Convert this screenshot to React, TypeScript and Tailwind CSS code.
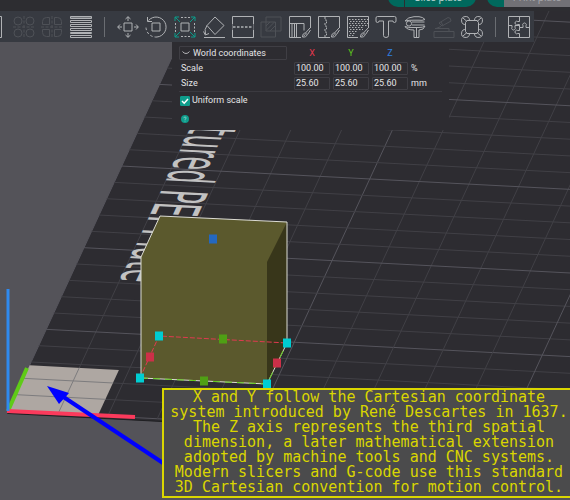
import type { ReactNode } from "react";
import clsx from "clsx";

type Tool = {
  label: string;
  disabled?: boolean;
  icon: ReactNode;
};

const brush = (
  <path d="M21 12l-4.5 5M21.5 14l-3 4.5M16.5 17c-2 0-3 1.500-3 4 2.500.3 4.500-.5 4.500-2.500zM14.500 20l2-1.500" />
);

const plateTools: Tool[] = [
  { label: "Add plate", icon: <path d="M.5.5h17v21H.5z" /> },
  {
    label: "Auto orient",
    disabled: true,
    icon: (
      <>
        <circle cx="5" cy="5" r="4" />
        <circle cx="17" cy="5" r="4" />
        <circle cx="5" cy="17" r="4" />
        <circle cx="17" cy="17" r="4" />
        <path d="M11 0v22M0 11h22" strokeDasharray="3 1.5" />
      </>
    ),
  },
  {
    label: "Arrange",
    disabled: true,
    icon: (
      <>
        <path d="M8.500 1.500v7h-7v-3q0-4 4-4zM13.500 1.500v7h7v-3q0-4-4-4zM8.500 20.500v-7h-7v3q0 4 4 4zM13.500 20.500v-7h7v3q0 4-4 4z" />
        <path d="M11 0v22M0 11h22" strokeDasharray="3 1.5" />
      </>
    ),
  },
  {
    label: "Variable layer height",
    icon: (
      <>
        <path d="M.5.5h21v2H.5z" fill="currentColor" fillOpacity="0.5" />
        <path d="M.5 4.500h21v2H.5zM.5 8.500h21v2H.5zM.5 12.500h21v2H.5zM.5 16.500h21v1H.5zM.5 19.500h21v2H.5z" />
      </>
    ),
  },
];

const objectTools: Tool[] = [
  {
    label: "Move",
    icon: (
      <>
        <path d="M7 7h8v8H7z" />
        <path d="M11 5V.8M8.500 3L11 .7 13.500 3M11 17v4.200M8.500 19l2.500 2.300 2.500-2.300M5 11H.8M3 8.500L.7 11 3 13.500M17 11h4.200M19 8.500l2.300 2.500-2.300 2.500" />
      </>
    ),
  },
  {
    label: "Rotate",
    icon: (
      <>
        <path d="M7 7h8v8H7z" />
        <path d="M3.500 4.500A10 10 0 1 1 12 21" />
        <path d="M12 21A10 10 0 0 1 1 10.500" strokeDasharray="2.500 2" />
        <path d="M2.500 1v4.500H7" />
      </>
    ),
  },
  {
    label: "Scale",
    icon: (
      <>
        <path d="M7 7h8v8H7z" />
        <path d="M7 1.500h9M7 20.500h9M1.500 7v9M20.500 7v9" strokeDasharray="2 1.500" />
        <path
          className="stroke-[#0a9c8b]"
          d="M6 6L1 1M1 5V1h4M16 6l5-5M17 1h4v4M6 16l-5 5M1 17v4h4M16 16l5 5M21 17v4h-4"
        />
      </>
    ),
  },
  {
    label: "Lay on face",
    icon: (
      <path d="M12 1l9 8.500-9 9L4 9.500zM4 9.500Q1 13 2.500 18.500M.5 15.500l1.800 3.500L6 17.500M1 21.500h21" />
    ),
  },
  {
    label: "Cut",
    icon: (
      <>
        <path d="M.5 8V.5h21V8M.5 14v7.500h21V14" />
        <path d="M.5 8v6M21.500 8v6" strokeOpacity="0.4" />
        <path d="M1 11h20" strokeDasharray="2.500 1.500" strokeWidth="1.5" />
      </>
    ),
  },
  {
    label: "Mesh boolean",
    disabled: true,
    icon: (
      <path d="M6 1h15v14H6zM1 6h14.500v15H1zM6 10l4-4M6 14.500L14.500 6M10 15l5.500-5.500" />
    ),
  },
  {
    label: "Support painting",
    icon: (
      <>
        <path d="M12 21.500H.5V.5h21V12M.5 7.500H15v7M7.500 7.500v14M3 8v13M5.500 8v13" />
        {brush}
      </>
    ),
  },
  {
    label: "Seam painting",
    icon: (
      <>
        <path d="M12 21.500H.5V.5h21V12" />
        <path d="M7 1v3h1.500v3H7v3h1.500v3H7v3h1.500v3H7v2" strokeDasharray="2 1" />
        {brush}
      </>
    ),
  },
  {
    label: "Fuzzy skin painting",
    icon: (
      <>
        <path d="M11 21.500H.5V.5h21V12" />
        <path
          d="M2 3.500h19M3 5.500h18M2 7.500h19M3 9.500h18M2 11.500h15M3 13.500h13M2 15.500h9M3 17.500h6M2 19.500h5"
          strokeDasharray="1.500 1.500"
        />
        {brush}
      </>
    ),
  },
  {
    label: "Text",
    icon: (
      <path d="M2.500.5h17q1.500 0 1.500 1.500v3q0 1.500-1.500 1.500T18 5h-4.500v14.500q0 2-2.500 2t-2.500-2V5H4q0 1.500-1.500 1.500T1 5V2Q1 .5 2.500.5z" />
    ),
  },
  {
    label: "Measure",
    icon: (
      <>
        <path d="M1 5Q4 1 10 .7h5q4 .3 6 2.800-3 1.300-6 .7h-5Q5 4 1 5zM8 6h12.500M8 9h12.500" />
        <circle cx="5" cy="7.500" r="2.600" />
        <path d="M1 10.500q3 1.300 8 1h6q4 0 6-1.500-1 4-6 4v7.500h-5V14q-7 0-9-3.500zM12.500 12v9.500" />
      </>
    ),
  },
  {
    label: "Assembly",
    disabled: true,
    icon: (
      <path d="M1 15.500h20v6H1zM3 12.500l5-2M2 12.500h14v3M6 7l9-5.500q3 0 3 3.500l-9 5zM8 6l2 3.500" />
    ),
  },
  {
    label: "Brim ears",
    icon: (
      <>
        <path d="M6 4.500h10l1.500 2v9l-1.500 2H6l-1.500-2v-9z" />
        <path d="M5 8.500A4 4 0 1 1 8.500 4M13.500 4A4 4 0 1 1 17 8.500M17 13.500A4 4 0 1 1 13.500 18M8.500 18A4 4 0 1 1 5 13.500" />
        <path d="M2 2l4 3.500M20 2l-4 3.500M2 20l4-3.500M20 20l-4-3.500" />
      </>
    ),
  },
];

const assemblyTools: Tool[] = [
  {
    label: "Assembly view",
    icon: (
      <>
        <path d="M.5.5h21v21H.5z" />
        <path d="M11.500.5v5H9.800a1.800 1.800 0 1 0 0 3h1.700v3M.5 9.500H4v1.700a1.800 1.800 0 1 0 3 0V9.500h4.500" />
        <path d="M11.500 11.500h3.500V9.800a1.800 1.800 0 1 1 3 0v1.700h3.500M11.500 21.500v-4H9.800a1.800 1.800 0 1 1 0-3h1.700v-3" />
      </>
    ),
  },
];

function ToolButton({ label, disabled, icon }: Tool) {
  return (
    <button
      type="button"
      aria-label={label}
      disabled={disabled}
      className={clsx("h-[22px] w-[22px] shrink-0", disabled ? "text-[#4e5157]" : "text-[#b0b2b5]")}
    >
      <svg viewBox="0 0 22 22" className="h-full w-full" fill="none" stroke="currentColor" aria-hidden>
        {icon}
      </svg>
    </button>
  );
}

function ToolDivider() {
  return <div className="mx-[5px] h-5 w-px shrink-0 bg-[#6a6d72]" />;
}

// Build plate units are millimetres: x runs right, y runs toward the viewer.
const PLATE = 600;
const ticks = Array.from({ length: 60 }, (_, i) => i);

function Handle({ x, y, fill }: { x: number; y: number; fill: string }) {
  return <rect x={x - 4} y={y - 4.5} width="8" height="9" fill={fill} />;
}

function Scene() {
  return (
    <svg className="absolute inset-0 h-full w-full" aria-label="Build plate">
      <g transform="matrix(4.96 0.258 -0.755 1.633 8.5 411)">
        <rect x="0" y={-PLATE} width={PLATE} height={PLATE + 1.5} fill="#2d2c31" />
        <path d={`M0 1.500H${PLATE}`} stroke="#1f1f22" vectorEffect="non-scaling-stroke" />
        {ticks.map((i) => (
          <path
            key={i}
            d={`M${i * 10} 0V${-PLATE}M0 ${-i * 10}H${PLATE}`}
            stroke={i % 5 === 0 ? "#55545c" : "#414046"}
            strokeWidth="1"
            vectorEffect="non-scaling-stroke"
          />
        ))}
        <text
          transform="translate(10 -81) rotate(90)"
          textAnchor="end"
          fill="#c2c2c2"
          className="font-['DejaVu_Sans'] text-[13px]"
        >
          Textured PEI Plate
        </text>
        <path d="M0 0V-28H18V0z" fill="#aea7a2" />
        <path d="M10 0V-28M0-10H18M0-20H18" stroke="#7d7c7e" fill="none" vectorEffect="non-scaling-stroke" />
      </g>

      {/* axes */}
      <path d="M8 411L27 368" stroke="#5fcb17" strokeWidth="4" />
      <path d="M7 411L135 417" stroke="#fb3a5c" strokeWidth="4" />
      <path d="M8 289V411" stroke="#2f8af0" strokeWidth="3" />

      {/* cube */}
      <path d="M160 216L287 222V343L267 384L141 378V257z" fill="#5b592d" />
      <path d="M287 222V343L267 384V262z" fill="#38361a" />
      <path d="M141 378V257L160 216L287 222V343" stroke="#dcdcd4" fill="none" />
      <path d="M141 378L267 384L287 343" stroke="#dcdcd4" fill="none" />
      <path d="M141 378L267 384L287 343" stroke="#5fcb17" fill="none" strokeDasharray="7 5" />
      <path d="M140 378L159 336L287 343" stroke="#e03a50" fill="none" strokeDasharray="5 2" />
      <Handle x={213} y={239} fill="#2468c0" />
      <Handle x={223} y={339} fill="#4f9f14" />
      <Handle x={204} y={381} fill="#4f9f14" />
      <Handle x={150} y={357} fill="#cc3048" />
      <Handle x={277} y={363} fill="#cc3048" />
      <Handle x={159} y={336} fill="#00cdd2" />
      <Handle x={287} y={343} fill="#00cdd2" />
      <Handle x={140} y={378} fill="#00cdd2" />
      <Handle x={267} y={384} fill="#00cdd2" />

      {/* pointer from the note */}
      <path d="M163 463L62 396" stroke="#0000ff" strokeWidth="4" />
      <path d="M47 386L69 393L59 404z" fill="#0000ff" />
    </svg>
  );
}

const axes = [
  { name: "X", color: "text-[#e8384f]" },
  { name: "Y", color: "text-[#5fc71b]" },
  { name: "Z", color: "text-[#2f7fe0]" },
];

function ValueRow({ label, value, unit }: { label: string; value: string; unit: string }) {
  return (
    <>
      <span className="pl-0.5">{label}</span>
      {axes.map(({ name }) => (
        <input
          key={name}
          aria-label={`${label} ${name}`}
          defaultValue={value}
          className="h-[13px] w-full rounded-[1px] border border-[#3f3e44] bg-transparent px-px outline-none"
        />
      ))}
      <span>{unit}</span>
    </>
  );
}

function ScalePanel() {
  return (
    <section className="relative mr-[121px] ml-[172px] h-[88px] bg-[#2d2c31] px-[7px] pt-1 font-['Roboto',sans-serif] text-[9px] leading-[13px] text-[#e4e4e6]">
      <div className="grid grid-cols-[112px_36px_36px_36px_1fr] items-center gap-x-[3px] gap-y-0.5">
        <div className="relative h-[14px] w-[108px]">
          <select
            aria-label="Coordinate system"
            className="h-full w-full appearance-none rounded-[1px] border border-[#3f3e44] bg-transparent pl-[13px] leading-3 outline-none"
          >
            <option>World coordinates</option>
          </select>
          <svg viewBox="0 0 8 4" className="absolute top-[5px] left-[3px] h-1 w-2" fill="none" stroke="#b5b5b8" aria-hidden>
            <path d="M.5.5q1.500 2 3.500 2t3.500-2" />
          </svg>
        </div>
        {axes.map(({ name, color }) => (
          <span key={name} className={clsx("text-center", color)}>
            {name}
          </span>
        ))}
        <span />
        <ValueRow label="Scale" value="100.00" unit="%" />
        <ValueRow label="Size" value="25.60" unit="mm" />
      </div>
      <hr className="mt-px border-[#3b3a40]" />
      <label className="mt-0.5 flex items-center gap-0.5 pl-px">
        <span className="relative h-[10px] w-[10px]">
          <input
            type="checkbox"
            defaultChecked
            className="peer block h-full w-full appearance-none rounded-[1px] border border-[#0f9d8c] checked:bg-[#0f9d8c]"
          />
          <svg
            viewBox="0 0 10 10"
            className="pointer-events-none absolute inset-0 hidden peer-checked:block"
            fill="none"
            stroke="#fff"
            strokeWidth="1.5"
            aria-hidden
          >
            <path d="M2 5l2.200 2.200L8 3" />
          </svg>
        </span>
        Uniform scale
      </label>
      <button
        type="button"
        aria-label="Help"
        className="mt-2 ml-0.5 flex h-2 w-2 items-center justify-center rounded-full bg-[#0f9d8c]"
      >
        <svg viewBox="0 0 8 8" className="h-2 w-2" fill="none" stroke="#8fd6cc" strokeWidth="0.8" aria-hidden>
          <path d="M2.800 3.200q0-1.200 1.200-1.200t1.200 1Q5.200 3.800 4 4.300V5M4 5.700v.8" />
        </svg>
      </button>
    </section>
  );
}

function TopBar() {
  return (
    <header className="relative flex h-[11px] items-end justify-end overflow-hidden bg-[#2d2d31] pb-1 font-['Open_Sans',sans-serif] text-[10px]">
      <div className="mr-[11px] flex h-5 w-[88px] shrink-0 gap-px">
        <button type="button" aria-label="Slice options" className="w-4 rounded-l-full bg-[#00695d]" />
        <button type="button" className="flex-1 rounded-r-full bg-[#00695d] pr-1 leading-5 text-[#c4dbd8]">
          Slice plate
        </button>
      </div>
      <div className="-mr-5 flex h-5 shrink-0">
        <button type="button" aria-label="Print options" className="w-[17px] rounded-l-full bg-[#00695d]" />
        <button type="button" className="w-[86px] bg-[#727176] pr-5 leading-5 text-[#a9a9ad]">
          Print plate
        </button>
      </div>
    </header>
  );
}

export default function App() {
  return (
    <main className="relative flex min-h-screen flex-col overflow-hidden bg-[#545359]">
      <Scene />
      <TopBar />
      <div
        role="toolbar"
        aria-label="Object tools"
        className="relative mr-9 flex h-[31px] items-center justify-between overflow-hidden bg-[#373a41] pr-1"
      >
        <div className="-ml-4 flex flex-1 items-center justify-between">
          {plateTools.map((tool) => (
            <ToolButton key={tool.label} {...tool} />
          ))}
          <ToolDivider />
          {objectTools.map((tool) => (
            <ToolButton key={tool.label} {...tool} />
          ))}
          <ToolDivider />
          {assemblyTools.map((tool) => (
            <ToolButton key={tool.label} {...tool} />
          ))}
        </div>
      </div>
      <ScalePanel />
      <p className="relative mt-auto mb-0.5 ml-[162px] border-2 border-r-0 border-[#dad600] bg-[#4b4b4c] pb-px pl-1 text-center font-['DejaVu_Sans_Mono',monospace] text-[15px] leading-[15px] text-[#dad600]">
        X and Y follow the Cartesian coordinate system introduced by René Descartes in 1637. The Z axis
        represents the third spatial dimension, a later mathematical extension adopted by machine tools and CNC
        systems. Modern slicers and G-code use this standard 3D Cartesian convention for motion control.
      </p>
    </main>
  );
}
